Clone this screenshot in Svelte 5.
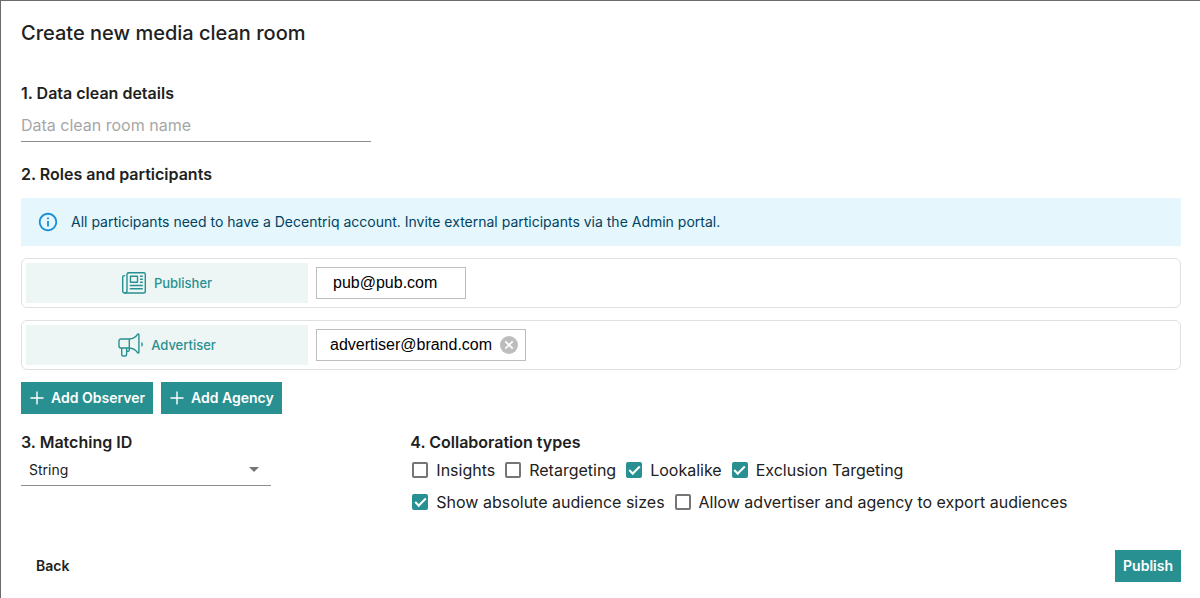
<script>
  let roomName = $state('');
  let matchingId = $state('String');
  let advertisers = $state(['advertiser@brand.com']);
  let types = $state([
    [
      { label: 'Insights', checked: false },
      { label: 'Retargeting', checked: false },
      { label: 'Lookalike', checked: true },
      { label: 'Exclusion Targeting', checked: true }
    ],
    [
      { label: 'Show absolute audience sizes', checked: true },
      { label: 'Allow advertiser and agency to export audiences', checked: false }
    ]
  ]);

  function removeAdvertiser(email) {
    advertisers = advertisers.filter((a) => a !== email);
  }
</script>

{#snippet plus()}
  <svg viewBox="0 0 16 16" width="16" height="16" aria-hidden="true">
    <path d="M8 1.500v13M1.500 8h13" fill="none" stroke="currentColor" stroke-width="1.4" />
  </svg>
{/snippet}

<main class="dialog">
  <h1>Create new media clean room</h1>

  <section class="details">
    <h2><label for="room-name">1. Data clean details</label></h2>
    <input id="room-name" class="name" type="text" placeholder="Data clean room name" bind:value={roomName} />
  </section>

  <section class="roles">
    <h2>2. Roles and participants</h2>
    <div class="alert">
      <svg viewBox="0 0 24 24" width="22" height="22" aria-hidden="true">
        <path fill="#1a90d9" d="M11 7h2v2h-2zm0 4h2v6h-2zm1-9C6.500 2 2 6.500 2 12s4.500 10 10 10 10-4.500 10-10S17.500 2 12 2zm0 18c-4.400 0-8-3.600-8-8s3.600-8 8-8 8 3.600 8 8-3.600 8-8 8z" />
      </svg>
      <p>All participants need to have a Decentriq account. Invite external participants via the Admin portal.</p>
    </div>

    <div class="participant">
      <div class="role">
        <svg viewBox="0 0 24 22" width="24" height="22" fill="none" stroke="currentColor" stroke-width="1.4" stroke-linecap="round" stroke-linejoin="round" aria-hidden="true">
          <path d="M6.500.8h15.200a1.600 1.600 0 0 1 1.600 1.600v16.800a1.800 1.800 0 0 1-1.800 1.800H2.800a2.100 2.100 0 0 1-2.100-2.100V5.200a1.600 1.600 0 0 1 1.600-1.600h.4" />
          <path d="M6.500.8a1.500 1.500 0 0 0-1.500 1.500v16.500a2.100 2.100 0 0 1-2.200 2.200M8.500 4.300h7v6h-7zM18.500 4.200h1.800M18.500 7.200h1.800M18.500 10.200h1.800M8.300 13.500h12M8.300 16.800h12" />
        </svg>
        <span>Publisher</span>
      </div>
      <div class="chip fixed">pub@pub.com</div>
    </div>

    <div class="participant">
      <div class="role">
        <svg viewBox="0 0 25 24" width="25" height="24" fill="none" stroke="currentColor" stroke-width="1.400" stroke-linecap="round" stroke-linejoin="round" aria-hidden="true">
          <path d="M11.300 6H3a2 2 0 0 0-2 2v5a2 2 0 0 0 2 2h8.300zM11.300 6c3.800-.3 6.400-1.800 8.200-4.700.4-.6 1.400-.4 1.400.4v17.600c0 .8-1 1-1.400.4-1.800-2.900-4.400-4.400-8.200-4.700M3.700 15v6.400a1.600 1.600 0 0 0 1.600 1.600H7a1.600 1.600 0 0 0 1.600-1.600V15M11.300 15v2a1.300 1.300 0 0 1-1.300 1.300H8.700M24 10v2.800" />
        </svg>
        <span>Advertiser</span>
      </div>
      {#each advertisers as email}
        <div class="chip">
          {email}
          <button class="remove" aria-label="Remove {email}" onclick={() => removeAdvertiser(email)}>
            <svg viewBox="0 0 18 18" width="18" height="18" aria-hidden="true">
              <circle cx="9" cy="9" r="9" fill="#bdbdbd" />
              <path d="m5.300 5.300 7.400 7.400m0-7.400-7.400 7.400" stroke="#fff" stroke-width="1.700" />
            </svg>
          </button>
        </div>
      {/each}
    </div>

    <div class="actions">
      <button class="btn">{@render plus()}Add Observer</button>
      <button class="btn">{@render plus()}Add Agency</button>
    </div>
  </section>

  <div class="columns">
    <section class="matching">
      <h2><label for="matching-id">3. Matching ID</label></h2>
      <div class="select">
        <select id="matching-id" bind:value={matchingId}>
          <option>String</option>
          <option>Email</option>
          <option>Phone number</option>
        </select>
        <svg viewBox="0 0 10 5" width="10" height="5" aria-hidden="true"><path d="M0 0h10L5 5z" fill="#757575" /></svg>
      </div>
    </section>

    <section class="collaboration">
      <h2>4. Collaboration types</h2>
      {#each types as row}
        <div class="checks">
          {#each row as type}
            <label><input type="checkbox" bind:checked={type.checked} />{type.label}</label>
          {/each}
        </div>
      {/each}
    </section>
  </div>

  <footer>
    <button class="btn text">Back</button>
    <button class="btn">Publish</button>
  </footer>
</main>

<style>
  :global(body) {
    background: #fff;
  }
  .dialog {
    box-sizing: border-box;
    min-height: 100vh;
    display: flex;
    flex-direction: column;
    padding: 20px 19px 16px 20px;
    border-top: 1px solid #6b6b6b;
    border-left: 1px solid #6b6b6b;
    font-family: Inter, sans-serif;
    font-size: 16px;
    color: #212121;
  }
  h1 {
    margin: 0 0 36px;
    font-size: 20px;
    font-weight: 500;
    line-height: 24px;
  }
  h2 {
    margin: 0;
    font-size: 16px;
    font-weight: 600;
    line-height: 24px;
  }
  button,
  input,
  select {
    font-family: inherit;
  }

  .name {
    display: block;
    box-sizing: border-box;
    width: 350px;
    max-width: 100%;
    height: 37px;
    padding: 4px 0 0;
    border: 0;
    border-bottom: 1px solid #8c8c8c;
    background: none;
    font-size: 16px;
    color: inherit;
    outline: none;
  }
  .name::placeholder {
    color: #a6a6a6;
    opacity: 1;
  }

  .roles {
    margin-top: 20px;
  }
  .alert {
    display: flex;
    align-items: center;
    gap: 12px;
    min-height: 48px;
    margin-top: 12px;
    padding: 0 16px;
    background: #e5f6fd;
    color: #014361;
  }
  .alert p {
    margin: 0;
    font-size: 14px;
    line-height: 20px;
  }

  .participant {
    display: flex;
    align-items: center;
    gap: 8px;
    margin-top: 12px;
    padding: 4px;
    border: 1px solid #e0e0e0;
    border-radius: 6px;
  }
  .role {
    display: flex;
    align-items: center;
    justify-content: center;
    gap: 8px;
    width: 282px;
    height: 40px;
    background: #eef6f5;
    color: #289090;
    font-size: 13px;
    font-weight: 500;
  }
  .chip {
    box-sizing: border-box;
    display: flex;
    align-items: center;
    gap: 8px;
    height: 32px;
    padding: 0 7px 0 13px;
    border: 1px solid #bdbdbd;
    font-family: "Liberation Sans", Arial, sans-serif;
    font-size: 16px;
    color: #000;
  }
  .chip.fixed {
    padding: 0 28px 0 16px;
  }
  .remove {
    display: flex;
    padding: 0;
    border: 0;
    background: none;
    cursor: pointer;
  }

  .actions {
    display: flex;
    gap: 8px;
    margin-top: 12px;
  }
  .btn {
    display: flex;
    align-items: center;
    gap: 6px;
    height: 32px;
    padding: 0 8px;
    border: 0;
    background: #289090;
    color: #fff;
    font-size: 14px;
    font-weight: 600;
    line-height: 16px;
    cursor: pointer;
  }
  .btn.text {
    padding: 0 15px;
    background: none;
    color: #212121;
  }

  .columns {
    display: grid;
    grid-template-columns: 1fr 2fr;
    gap: 4px;
    margin-top: 16px;
  }
  .select {
    display: flex;
    align-items: center;
    position: relative;
    width: 250px;
    max-width: 100%;
    border-bottom: 1px solid #8c8c8c;
  }
  .select select {
    appearance: none;
    width: 100%;
    height: 31px;
    padding: 0 32px 0 8px;
    border: 0;
    background: none;
    color: inherit;
    font-size: 14px;
    outline: none;
  }
  .select svg {
    position: absolute;
    right: 12px;
    pointer-events: none;
  }
  .checks {
    display: flex;
    flex-wrap: wrap;
    column-gap: 8px;
  }
  .checks label {
    display: flex;
    align-items: center;
    gap: 8px;
    line-height: 32px;
  }
  .checks input {
    appearance: none;
    box-sizing: border-box;
    display: grid;
    place-items: center;
    width: 16px;
    height: 16px;
    margin: 0 0 0 2px;
    border: 2px solid #757575;
    border-radius: 2px;
  }
  .checks input:checked {
    border-color: #289090;
    background: #289090;
  }
  .checks input:checked::before {
    content: "";
    width: 9px;
    height: 4px;
    border-left: 2px solid #fff;
    border-bottom: 2px solid #fff;
    transform: translateY(-1px) rotate(-45deg);
  }

  footer {
    display: flex;
    justify-content: space-between;
    margin-top: auto;
    padding-top: 24px;
  }
</style>
